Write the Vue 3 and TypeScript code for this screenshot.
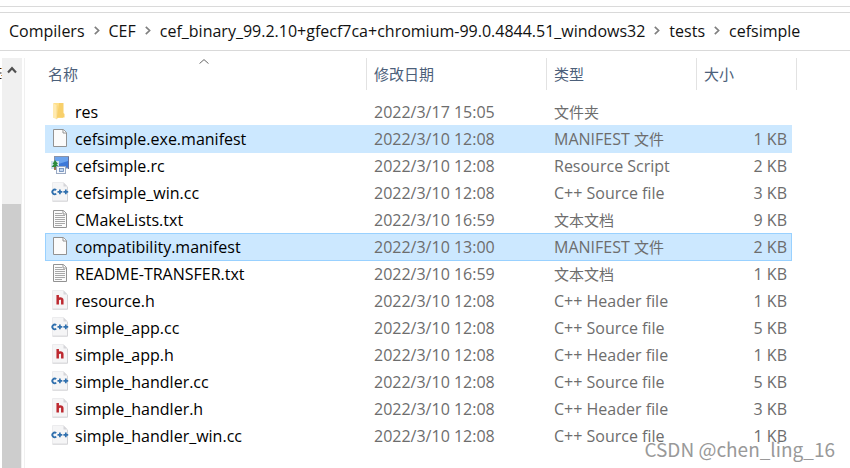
<script setup lang="ts">
type IconKind = 'folder' | 'blank' | 'rc' | 'cpp' | 'text' | 'header'

interface FileEntry {
  name: string
  icon: IconKind
  modified: string
  kind: string
  kindCjk?: string
  size: string
  selected?: boolean
  focused?: boolean
}

const crumbs: string[] = [
  'Compilers',
  'CEF',
  'cef_binary_99.2.10+gfecf7ca+chromium-99.0.4844.51_windows32',
  'tests',
  'cefsimple',
]

const files: FileEntry[] = [
  { name: 'res', icon: 'folder', modified: '2022/3/17 15:05', kind: '', kindCjk: '文件夹', size: '' },
  { name: 'cefsimple.exe.manifest', icon: 'blank', modified: '2022/3/10 12:08', kind: 'MANIFEST ', kindCjk: '文件', size: '1 KB', selected: true },
  { name: 'cefsimple.rc', icon: 'rc', modified: '2022/3/10 12:08', kind: 'Resource Script', size: '2 KB' },
  { name: 'cefsimple_win.cc', icon: 'cpp', modified: '2022/3/10 12:08', kind: 'C++ Source file', size: '3 KB' },
  { name: 'CMakeLists.txt', icon: 'text', modified: '2022/3/10 16:59', kind: '', kindCjk: '文本文档', size: '9 KB' },
  { name: 'compatibility.manifest', icon: 'blank', modified: '2022/3/10 13:00', kind: 'MANIFEST ', kindCjk: '文件', size: '2 KB', selected: true, focused: true },
  { name: 'README-TRANSFER.txt', icon: 'text', modified: '2022/3/10 16:59', kind: '', kindCjk: '文本文档', size: '1 KB' },
  { name: 'resource.h', icon: 'header', modified: '2022/3/10 12:08', kind: 'C++ Header file', size: '1 KB' },
  { name: 'simple_app.cc', icon: 'cpp', modified: '2022/3/10 12:08', kind: 'C++ Source file', size: '5 KB' },
  { name: 'simple_app.h', icon: 'header', modified: '2022/3/10 12:08', kind: 'C++ Header file', size: '1 KB' },
  { name: 'simple_handler.cc', icon: 'cpp', modified: '2022/3/10 12:08', kind: 'C++ Source file', size: '5 KB' },
  { name: 'simple_handler.h', icon: 'header', modified: '2022/3/10 12:08', kind: 'C++ Header file', size: '3 KB' },
  { name: 'simple_handler_win.cc', icon: 'cpp', modified: '2022/3/10 12:08', kind: 'C++ Source file', size: '1 KB' },
]
</script>

<template>
  <div class="explorer">
    <div class="toolbar-edge"></div>
    <nav class="address">
      <template v-for="(crumb, i) in crumbs" :key="crumb">
        <svg v-if="i > 0" class="chevron" width="6" height="9" viewBox="0 0 6 9">
          <path d="M0.8 0.8 L4.6 4.5 L0.8 8.2" fill="none" stroke="#808080" stroke-width="1.7" />
        </svg>
        <a href="#" class="crumb">{{ crumb }}</a>
      </template>
    </nav>

    <div class="body">
      <aside class="tree">
        <svg class="tree-text" width="2" height="12" viewBox="0 0 2 12">
          <path d="M0 1.5H1 M0 6H1.5 M0 11.5H1.5" stroke="#222" stroke-width="1" />
          <path d="M1 1.5H2 M1 8.5H2" stroke="#d8934a" stroke-width="1" />
        </svg>
        <div class="scrollbar">
          <button type="button" class="scroll-up" aria-label="Scroll up">
            <svg width="10" height="8" viewBox="0 0 10 8">
              <path d="M1 6.4 L5 2.2 L9 6.4" fill="none" stroke="#505050" stroke-width="2.2" />
            </svg>
          </button>
          <div class="thumb"></div>
        </div>
      </aside>

      <main class="list">
        <table>
          <colgroup>
            <col class="c-name" />
            <col class="c-date" />
            <col class="c-type" />
            <col class="c-size" />
            <col class="c-end" />
          </colgroup>
          <thead>
            <tr>
              <th>
                <span>名称</span>
                <svg class="sort" width="10" height="5" viewBox="0 0 10 5">
                  <path d="M0.5 4.6 L5 0.6 L9.5 4.6" fill="none" stroke="#666" stroke-width="1" />
                </svg>
              </th>
              <th>修改日期</th>
              <th>类型</th>
              <th>大小</th>
              <th></th>
            </tr>
          </thead>
          <tbody>
            <tr v-for="f in files" :key="f.name" :class="{ selected: f.selected, focused: f.focused }">
              <td>
                <div class="name">
                  <svg class="icon" width="20" height="20" viewBox="0 0 20 20">
                    <template v-if="f.icon === 'folder'">
                      <path d="M3.5 2 H13 V17 H3.5Z" fill="#ffe08a" />
                      <path d="M9 2 H13.5 V12 L14.5 13 V16.5 H7Z" fill="#f8d06b" />
                      <path d="M3 2 L7 4.5 V18.5 L3 16.5Z" fill="#ffeab0" />
                      <path d="M7 4.5 V18" stroke="#f1cc70" stroke-width="0.6" />
                    </template>
                    <template v-else-if="f.icon === 'blank' || f.icon === 'text'">
                      <path d="M3.5 1.5 H13.5 L16.5 4.5 V18.5 H3.5Z" fill="#fbfbfb" stroke="#929292" />
                      <path d="M13 1.5 V5 H16.5" fill="#fff" stroke="#929292" />
                      <path
                        v-if="f.icon === 'text'"
                        d="M5 4.5H12 M5 6.5H15 M5 8.5H15 M5 10.5H15 M5 12.5H15 M5 14.5H15 M5 16.5H12"
                        stroke="#a8a8a8"
                      />
                    </template>
                    <template v-else-if="f.icon === 'rc'">
                      <rect x="4.5" y="1.5" width="14" height="11.5" fill="#3d78d8" stroke="#8a93a8" />
                      <path d="M5 2 H18 V6 L5 10Z" fill="#6ba3ee" />
                      <path d="M18.5 2 V14" stroke="#66709c" />
                      <rect x="1" y="6" width="8" height="8" fill="#cfe0ee" />
                      <path d="M5 5 L8 9 H6.5 L9 12 H1.5 L4 9 H2.5Z" fill="#2c8a3b" />
                      <rect x="4.2" y="12" width="1.6" height="3" fill="#865b2b" />
                      <rect x="6.5" y="11.5" width="9" height="7" fill="#f5f8fd" stroke="#9aa9c2" />
                      <rect x="9.5" y="13.5" width="4" height="3" fill="#c0d3ee" stroke="#6788b6" stroke-width="0.8" />
                    </template>
                    <template v-else>
                      <path d="M2.5 0.5 H13.5 L17.5 4.5 V19 H2.5Z" fill="#f5f5f6" stroke="#ececee" />
                      <path d="M13.5 0.5 L17.5 4.5 H13.5Z" fill="#d6d6d9" />
                      <path d="M2.5 19.2 H17.5 V5" fill="none" stroke="#d4d4d7" />
                      <template v-if="f.icon === 'cpp'">
                        <path d="M6.2 8.2 A2.3 2.3 0 1 0 6.2 11.6" fill="none" stroke="#3070ae" stroke-width="1.8" />
                        <path d="M7.5 9.9H12.3 M9.9 7.5V12.3 M13.4 9.9H18.2 M15.8 7.5V12.3" stroke="#3070ae" stroke-width="1.7" />
                      </template>
                      <path
                        v-else
                        d="M7.7 5 V14.5 M7.7 10 C8 8.2 12.3 7.6 12.3 10 V14.5"
                        fill="none"
                        stroke="#bd2930"
                        stroke-width="2.5"
                      />
                    </template>
                  </svg>
                  <span>{{ f.name }}</span>
                </div>
              </td>
              <td>{{ f.modified }}</td>
              <td>{{ f.kind }}<span v-if="f.kindCjk" class="cjk">{{ f.kindCjk }}</span></td>
              <td class="size">{{ f.size }}</td>
            </tr>
          </tbody>
        </table>
      </main>
    </div>
    <div class="watermark">CSDN @chen_ling_16</div>
  </div>
</template>

<style>
body {
  margin: 0;
  background: #fff;
}
</style>

<style scoped>
.explorer {
  position: relative;
  display: flex;
  flex-direction: column;
  min-height: 100vh;
  overflow: hidden;
  background: #fff;
  color: #000;
  font-family: "Open Sans", "Noto Sans CJK SC", sans-serif;
  font-size: 16px;
}
.toolbar-edge {
  height: 6px;
  border-bottom: 1px solid #dadada;
}
.address {
  box-sizing: border-box;
  display: flex;
  align-items: center;
  gap: 9px;
  height: 39px;
  margin-top: 5px;
  padding: 0 0 2px 9px;
  border-top: 1px solid #d9d9d9;
  border-bottom: 1px solid #d9d9d9;
  white-space: nowrap;
}
.crumb {
  color: #111;
  text-decoration: none;
}
.chevron {
  flex: none;
}
.body {
  display: flex;
  flex: 1;
  padding-top: 7px;
}
.tree {
  display: flex;
  flex: none;
  border-right: 1px solid #f0f0f0;
  padding-right: 2px;
}
.tree-text {
  margin-top: 9px;
}
.scrollbar {
  display: flex;
  flex-direction: column;
  width: 20px;
  background: #f0f0f0;
}
.scroll-up {
  height: 22px;
  padding: 0;
  border: 0;
  background: none;
}
.thumb {
  flex: 1;
  margin-top: 124px;
  margin-right: 1px;
  background: #cdcdcd;
}
.list {
  flex: 1;
  padding-left: 20px;
}
table {
  width: 752px;
  table-layout: fixed;
  border-collapse: separate;
  border-spacing: 0;
}
.c-name { width: 322px; }
.c-date { width: 180px; }
.c-type { width: 150px; }
.c-size { width: 95px; }
.c-end { width: 5px; }
th {
  position: relative;
  box-sizing: border-box;
  height: 32px;
  padding: 0 0 0 7px;
  border-right: 1px solid #e2e2e2;
  color: #4c607a;
  font-size: 15px;
  font-weight: 400;
  line-height: 32px;
  text-align: left;
}
th:first-child {
  padding-left: 3px;
}
th:nth-child(4) {
  border-right: 0;
}
th:last-child {
  padding: 0;
}
.sort {
  position: absolute;
  top: 1px;
  left: 154px;
}
tbody::before {
  content: "";
  display: block;
  height: 8px;
}
td {
  box-sizing: border-box;
  height: 27px;
  padding: 0 0 0 7px;
  color: #6d6d6d;
  line-height: 25px;
  border-top: 1px solid transparent;
  white-space: nowrap;
}
td:first-child {
  padding-left: 5px;
  color: #000;
}
td.size {
  padding: 0 5px 0 0;
  text-align: right;
}
.name {
  display: flex;
  align-items: center;
  gap: 5px;
  height: 25px;
}
.icon {
  flex: none;
  margin-bottom: 3px;
}
.cjk {
  font-size: 15px;
}
.selected td {
  background: #cce8ff;
  border-top-color: #cce8ff;
  box-shadow: 0 1px #cce8ff;
}
.focused td {
  border-top-color: #99d1ff;
  box-shadow: 0 1px #99d1ff;
}
.focused td:first-child {
  border-left: 1px solid #99d1ff;
  padding-left: 4px;
}
.focused td.size {
  border-right: 1px solid #99d1ff;
  padding-right: 4px;
}
.watermark {
  position: absolute;
  right: 15px;
  bottom: 5px;
  color: #999;
  font-family: "Noto Sans CJK SC", sans-serif;
  font-size: 19px;
  line-height: 28px;
  text-shadow: 1px 1px #fff;
}
</style>
